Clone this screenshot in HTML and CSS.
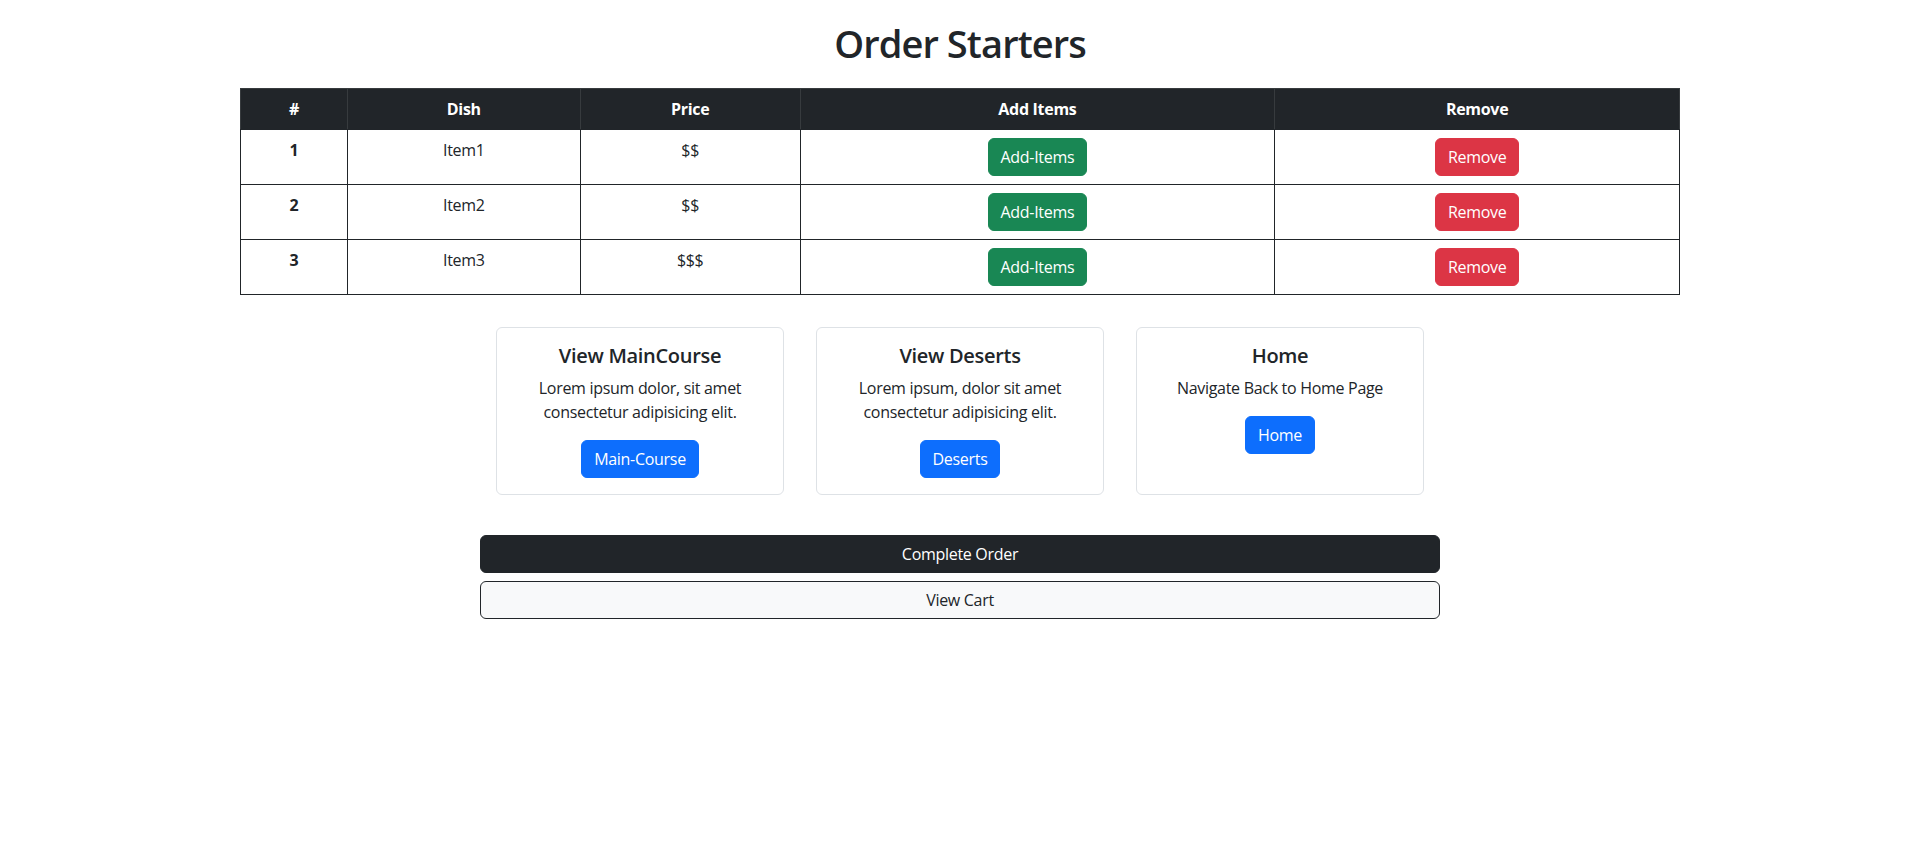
FILE: index.html
```html
<!DOCTYPE html>
<html lang="en">
<head>
<meta charset="utf-8">
<title>Order Starters</title>
<link rel="stylesheet" href="styles.css">
</head>
<body>
<div class="page">
  <h1 class="title">Order Starters</h1>
  <table class="orders">
    <colgroup>
      <col class="c-num"><col class="c-dish"><col class="c-price"><col class="c-add"><col class="c-rem">
    </colgroup>
    <thead>
      <tr><th>#</th><th>Dish</th><th>Price</th><th>Add Items</th><th>Remove</th></tr>
    </thead>
    <tbody>
      <tr><th>1</th><td>Item1</td><td>$$</td><td><button class="btn btn-success">Add-Items</button></td><td><button class="btn btn-danger">Remove</button></td></tr>
      <tr><th>2</th><td>Item2</td><td>$$</td><td><button class="btn btn-success">Add-Items</button></td><td><button class="btn btn-danger">Remove</button></td></tr>
      <tr><th>3</th><td>Item3</td><td>$$$</td><td><button class="btn btn-success">Add-Items</button></td><td><button class="btn btn-danger">Remove</button></td></tr>
    </tbody>
  </table>

  <div class="cards">
    <div class="card">
      <h5 class="card-title">View MainCourse</h5>
      <p class="card-text">Lorem ipsum dolor, sit amet consectetur adipisicing elit.</p>
      <button class="btn btn-primary">Main-Course</button>
    </div>
    <div class="card">
      <h5 class="card-title">View Deserts</h5>
      <p class="card-text">Lorem ipsum, dolor sit amet consectetur adipisicing elit.</p>
      <button class="btn btn-primary">Deserts</button>
    </div>
    <div class="card">
      <h5 class="card-title">Home</h5>
      <p class="card-text">Navigate Back to Home Page</p>
      <button class="btn btn-primary">Home</button>
    </div>
  </div>

  <div class="actions">
    <button class="btn btn-dark">Complete Order</button>
    <button class="btn btn-light">View Cart</button>
  </div>
</div>
</body>
</html>
```
FILE: styles.css
```css
* { box-sizing: border-box; }
body {
  margin: 0;
  font-family: "Open Sans", "Noto Sans", sans-serif;
  font-size: 16px;
  line-height: 1.5;
  letter-spacing: -0.3px;
  color: #212529;
  background: #fff;
}
.page {
  display: flex;
  flex-direction: column;
  align-items: center;
}
.title {
  font-size: 38px;
  font-weight: 600;
  line-height: 48px;
  letter-spacing: -0.9px;
  margin: 19px 0 21px;
}
.orders {
  width: 1440px;
  border-collapse: collapse;
  border: 1px solid #212529;
}
.c-num { width: 107px; }
.c-dish { width: 233px; }
.c-price { width: 220px; }
.c-add { width: 475px; }
.c-rem { width: 405px; }
.orders th, .orders td {
  padding: 8px;
  text-align: center;
  vertical-align: top;
  border: 1px solid #212529;
}
.orders thead th {
  background: #212529;
  color: #fff;
  font-weight: 700;
  border-color: #373b3e;
  border-bottom-color: #212529;
}
.orders tbody th { font-weight: 700; }
.btn {
  display: inline-block;
  font-family: inherit;
  font-size: 16px;
  line-height: 24px;
  font-weight: 400;
  letter-spacing: -0.3px;
  padding: 6px 12px;
  border: 1px solid transparent;
  border-radius: 6px;
  color: #fff;
  cursor: pointer;
}
.btn-success { background: #198754; border-color: #198754; }
.btn-danger { background: #dc3545; border-color: #dc3545; }
.btn-primary { background: #0d6efd; border-color: #0d6efd; }
.btn-dark { background: #212529; border-color: #212529; }
.btn-light { background: #f8f9fa; border-color: #212529; color: #212529; }
.cards {
  display: flex;
  gap: 32px;
  margin-top: 32px;
}
.card {
  width: 288px;
  border: 1px solid #dee2e6;
  border-radius: 6px;
  padding: 16px;
  text-align: center;
  display: flex;
  flex-direction: column;
  align-items: center;
}
.card-title {
  font-size: 20px;
  font-weight: 600;
  line-height: 24px;
  margin: 0 0 8px;
}
.card-text {
  margin: 0 0 16px;
}
.actions {
  width: 960px;
  margin-top: 40px;
  display: grid;
  gap: 8px;
}
```
